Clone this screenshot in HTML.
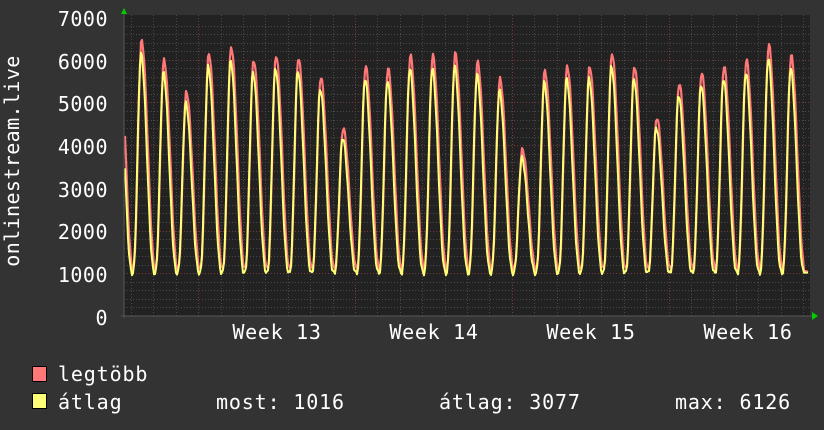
<!DOCTYPE html>
<html><head><meta charset="utf-8"><style>
html,body{margin:0;padding:0;background:#333;}
svg{display:block}
text{font-family:"DejaVu Sans Mono","Liberation Mono",monospace;fill:#fff;}
</style></head><body>
<svg id="s" width="824" height="430" viewBox="0 0 824 430" xmlns="http://www.w3.org/2000/svg">
<rect width="824" height="430" fill="#333"/>
<rect x="124" y="15" width="686" height="301" fill="#222"/>
<g id="grid"></g>
<path id="red" fill="none" stroke="#ff7777" stroke-width="2.2" stroke-linejoin="round"/>
<path id="yel" fill="none" stroke="#ffff77" stroke-width="2" stroke-linejoin="round"/>
<line x1="124" y1="12" x2="124" y2="318" stroke="#555" stroke-width="1"/>
<line x1="121" y1="316" x2="812" y2="316" stroke="#555" stroke-width="1"/>
<polygon points="121,14 127,14 124,8" fill="#0c0"/>
<polygon points="812,312 812,320 818,316" fill="#0c0"/>
<g font-size="20" text-anchor="end" letter-spacing="0.5">
<text x="108" y="26">7000</text>
<text x="108" y="69">6000</text>
<text x="108" y="111">5000</text>
<text x="108" y="154">4000</text>
<text x="108" y="197">3000</text>
<text x="108" y="239">2000</text>
<text x="108" y="282">1000</text>
<text x="108" y="325">0</text>
</g>
<g font-size="20" text-anchor="middle" letter-spacing="0.7">
<text x="277" y="339">Week 13</text>
<text x="434" y="339">Week 14</text>
<text x="591" y="339">Week 15</text>
<text x="748" y="339">Week 16</text>
</g>
<text font-size="20" letter-spacing="0.4" text-anchor="middle" transform="translate(19,161) rotate(-90)">onlinestream.live</text>
<rect x="32.5" y="366.5" width="14" height="15" fill="#ff7777" stroke="#000"/>
<rect x="32.5" y="393.5" width="14" height="15" fill="#ffff77" stroke="#000"/>
<g font-size="20" letter-spacing="0.85">
<text x="58" y="381">legtöbb</text>
<text x="58" y="409">átlag</text>
<text x="216" y="409">most: 1016</text>
<text x="439" y="409">átlag: 3077</text>
<text x="675" y="409">max: 6126</text>
</g>
</svg>
<script>
(function(){
var g=document.getElementById('grid'),h='';
function Y(v){return 316-v*299/7000;}
for(var v=200;v<7000;v+=200){var y=Math.round(Y(v))+.5;var maj=(v%1000==0);
h+='<line x1="124" x2="810" y1="'+y+'" y2="'+y+'" stroke="'+(maj?'#7a3a3a':'#4a4a4a')+'" stroke-dasharray="1,2"/>';}
for(var x=131;x<810;x+=22.4){var xx=Math.round(x)+.5;var m=((x-198)%156.8+156.8)%156.8;var maj=m<1||m>155.8;
h+='<line y1="15" y2="318" x1="'+xx+'" x2="'+xx+'" stroke="'+(maj?'#7a3a3a':'#4a4a4a')+'" stroke-dasharray="1,2"/>';}
g.innerHTML=h;
var pk=[6450,6000,5250,6150,6300,6000,6100,6050,5600,4400,5850,5800,6100,6100,6150,5950,5550,3900,5750,5850,5850,6150,5850,4650,5450,5700,5850,6000,6350,6100];
function shape(s){
 var f;
 if(s<14) f=(1+Math.cos(Math.PI*s/14))/2;
 else f=(1-Math.cos(Math.PI*(s-14)/8.4))/2;
 return Math.pow(f,1.15);
}
var r='',yl='';
for(var x=125;x<=806;x+=1){
 var t=(x-141.6)/22.4,i=Math.floor(t),s=(t-i)*22.4;
 var pA=pk[Math.max(0,Math.min(pk.length-1,i))];
 var pB=pk[Math.max(0,Math.min(pk.length-1,i+1))];
 var p=s<14?pA:pB;
 var f=shape(s);
 var n=Math.sin(x*1.7)*50;
 var vr=1100+(p-1100)*f+n;
 var fy=shape((s+0.6)%22.4);
 var vy=1000+(p*0.95-1000)*Math.pow(fy,1.1)+n;
 if(x>=804){vr=1050;vy=1016;}
 r+=(r?'L':'M')+x.toFixed(1)+','+Y(vr).toFixed(1);
 yl+=(yl?'L':'M')+x.toFixed(1)+','+Y(vy).toFixed(1);
}
r+='L808,'+Y(1030).toFixed(1);
yl+='L808,'+Y(1016).toFixed(1);
document.getElementById('red').setAttribute('d',r);
document.getElementById('yel').setAttribute('d',yl);
})();
</script>
</body></html>
